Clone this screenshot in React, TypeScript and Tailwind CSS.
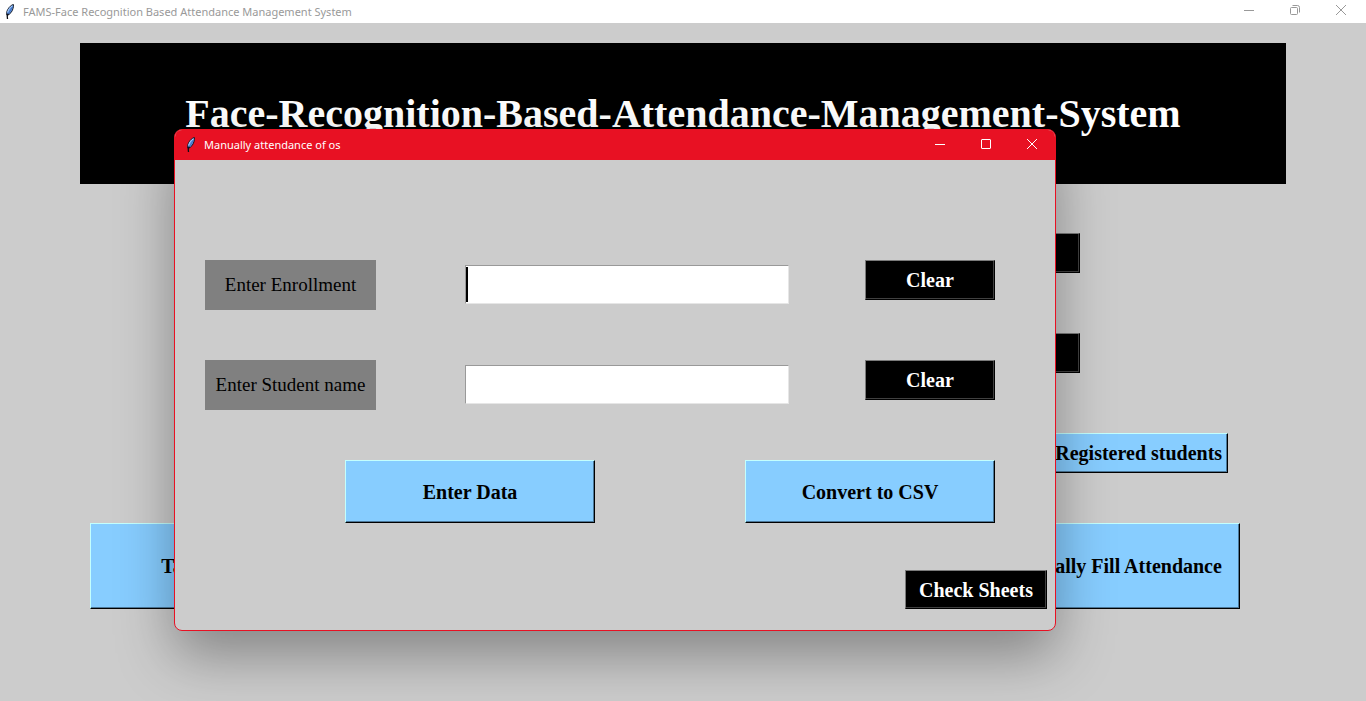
import type { ButtonHTMLAttributes, ReactNode } from "react";
import clsx from "clsx";

function Feather() {
  return (
    <svg viewBox="0 0 16 16" className="size-4 shrink-0" aria-hidden="true">
      <path
        d="M11.4 0.5C9.4 0.9 7 3 5.6 5.8C4.7 7.6 4.4 9.2 4.6 10.8L5.6 11.2C8 10.4 10.2 7.6 11 4.6C11.4 3.2 11.7 1.8 11.4 0.5Z"
        fill="#5b93e6"
        stroke="#0b0d14"
        strokeWidth="0.9"
      />
      <path d="M10.4 1.8C8.2 2.8 6.4 5.2 5.6 8.4" fill="none" stroke="#b9d6fb" strokeWidth="1" />
      <path d="M10.2 3.4L6.4 9.8" fill="none" stroke="#2a4f93" strokeWidth="0.5" />
      <path d="M6.2 9.6L5.2 11.6L5.5 15" fill="none" stroke="#0b0d14" strokeWidth="1.3" />
    </svg>
  );
}

type GlyphName = "minimize" | "maximize" | "restore" | "close";

const glyphs: Record<GlyphName, ReactNode> = {
  minimize: <path d="M0 5.5H10" />,
  maximize: <rect x="0.5" y="0.5" width="9" height="9" rx="0.5" />,
  restore: (
    <>
      <rect x="0.5" y="2.5" width="7" height="7" rx="1" />
      <path d="M2.5 0.5H7.5Q9.5 0.5 9.5 2.5V7.5" />
    </>
  ),
  close: <path d="M0 0L10 10M10 0L0 10" />,
};

function WindowControls({ names, className }: { names: GlyphName[]; className?: string }) {
  return (
    <div className={clsx("flex self-start", className)}>
      {names.map((name) => (
        <button key={name} type="button" aria-label={name} className="flex w-[46px] items-center justify-center">
          <svg viewBox="0 0 10 10" className="size-[10px] overflow-visible" fill="none" stroke="currentColor">
            {glyphs[name]}
          </svg>
        </button>
      ))}
    </div>
  );
}

type TkButtonProps = ButtonHTMLAttributes<HTMLButtonElement> & { tone: "sky" | "black" };

function TkButton({ tone, className, ...rest }: TkButtonProps) {
  return (
    <button
      type="button"
      className={clsx(
        "shrink-0 whitespace-nowrap border text-xl font-bold leading-6",
        tone === "sky"
          ? "border-t-[#c3fffe] border-l-[#c3fffe] border-r-black border-b-black bg-[#87cdff] text-black shadow-[inset_-1px_-1px_0_#4c7899]"
          : "border-t-[#7a7a7a] border-l-[#7a7a7a] border-r-black border-b-black bg-black text-white shadow-[inset_-1px_-1px_0_#404040]",
        className,
      )}
      {...rest}
    />
  );
}

function Field({ id, label, active = false }: { id: string; label: string; active?: boolean }) {
  return (
    <div className="flex items-start">
      <label htmlFor={id} className="flex h-[50px] w-[171px] items-center justify-center bg-[#808080] text-[19px] leading-6">
        {label}
      </label>
      <div className="relative mt-[5px] ml-[89px]">
        <input
          id={id}
          type="text"
          className="block h-[39px] w-[324px] border border-t-[#999] border-l-[#999] border-r-[#e6e6e6] border-b-[#e6e6e6] bg-white px-1 text-xl outline-none"
        />
        {active && <span className="absolute top-[2px] left-px h-[35px] w-[2px] bg-black" />}
      </div>
      <TkButton tone="black" className="ml-[76px] h-10 w-[130px]">
        Clear
      </TkButton>
    </div>
  );
}

function AttendanceDialog() {
  return (
    <section
      role="dialog"
      aria-labelledby="dialog-title"
      className="absolute top-[129px] left-[174px] overflow-hidden rounded-lg border border-[#e81123] bg-[#cccccc] shadow-[0_24px_56px_rgba(0,0,0,0.35)]"
    >
      <header className="flex h-[30px] items-center bg-[#e81123] pl-2 font-['Noto_Sans',sans-serif] text-white">
        <Feather />
        <h2 id="dialog-title" className="ml-[5px] grow text-[11px] leading-4">
          Manually attendance of os
        </h2>
        <WindowControls names={["minimize", "maximize", "close"]} className="h-7" />
      </header>
      <form className="flex flex-col pt-[100px] pr-2 pb-[21px] pl-[30px]">
        <div className="mr-[52px] flex flex-col gap-[50px]">
          <Field id="enrollment" label="Enter Enrollment" active />
          <Field id="student-name" label="Enter Student name" />
        </div>
        <div className="mt-[50px] mr-[52px] flex justify-end gap-[150px]">
          <TkButton tone="sky" className="h-[63px] w-[250px]">
            Enter Data
          </TkButton>
          <TkButton tone="sky" className="h-[63px] w-[250px]">
            Convert to CSV
          </TkButton>
        </div>
        <TkButton tone="black" className="mt-[47px] h-[39px] w-[142px] self-end">
          Check Sheets
        </TkButton>
      </form>
    </section>
  );
}

export default function App() {
  return (
    <div className="relative flex min-h-screen flex-col overflow-hidden bg-[#cccccc] font-['Liberation_Serif',serif] text-black">
      <header className="flex h-[23px] items-center bg-white pl-[2px] font-['Noto_Sans',sans-serif] text-[#999]">
        <Feather />
        <span className="ml-[5px] grow text-[11px] leading-4">FAMS-Face Recognition Based Attendance Management System</span>
        <WindowControls names={["minimize", "restore", "close"]} className="h-5 pr-[2px]" />
      </header>
      <main className="flex flex-col pt-5">
        <h1 className="mx-20 flex h-[141px] items-center justify-center bg-black text-[40px] leading-[48px] font-bold whitespace-nowrap text-white">
          Face-Recognition-Based-Attendance-Management-System
        </h1>
        <div className="mt-[49px] flex flex-col items-end gap-[60px] pr-[286px]">
          <TkButton tone="black" className="h-10 w-[130px]">
            Clear
          </TkButton>
          <TkButton tone="black" className="h-10 w-[130px]">
            Clear
          </TkButton>
        </div>
        <div className="mt-[60px] flex justify-end pr-[138px]">
          <TkButton tone="sky" className="h-10 w-[238px]">
            Check Registered students
          </TkButton>
        </div>
        <div className="mt-[50px] flex justify-between pr-[126px] pl-[90px]">
          <TkButton tone="sky" className="h-[86px] w-[250px]">
            Take Images
          </TkButton>
          <TkButton tone="sky" className="h-[86px] w-[254px]">
            Manually Fill Attendance
          </TkButton>
        </div>
      </main>
      <AttendanceDialog />
    </div>
  );
}
